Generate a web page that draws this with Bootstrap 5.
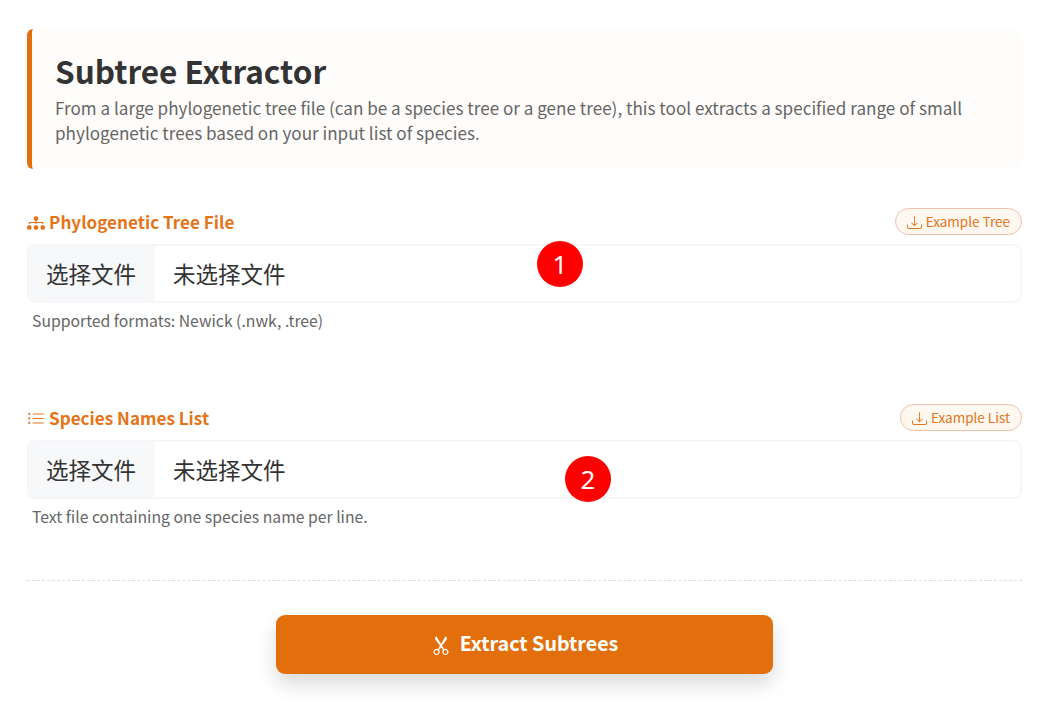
<!DOCTYPE html>
<html lang="en">
<head>
    <meta charset="UTF-8">
    <meta name="viewport" content="width=device-width, initial-scale=1.0">
    <title>Subtree Extractor</title>
    <link href="https://cdn.jsdelivr.net/npm/bootstrap@5.3.0/dist/css/bootstrap.min.css" rel="stylesheet">
    <style>
        body {
            font-family: "Noto Sans CJK SC", "Noto Sans", sans-serif;
            background: #fff;
            color: #333;
            min-height: 100vh;
        }
        .tool-page {
            padding: 29px 29px 34px 27px;
        }
        .tool-header {
            background: #fffdfb;
            border-left: 5px solid #e36f0c;
            border-radius: 6px;
            height: 140px;
            padding: 18px 23px;
            margin-bottom: 39px;
        }
        .tool-header h1 {
            font-size: 31.5px;
            font-weight: 700;
            line-height: 46px;
            margin: 0 0 2px;
            color: #333;
        }
        .tool-header p {
            font-size: 17.1px;
            line-height: 25px;
            margin: 0;
            color: #666;
        }
        .field-block {
            height: 196px;
        }
        .field-block-last {
            height: 176px;
        }
        .field-head {
            height: 27px;
            margin-bottom: 9px;
        }
        .field-label {
            font-size: 17.1px;
            font-weight: 700;
            color: #e3741a;
            margin: 0;
            line-height: 27px;
        }
        .field-label svg {
            width: 18px;
            height: 18px;
            margin-right: 4px;
            vertical-align: -3px;
        }
        .example-btn {
            font-size: 13.5px;
            line-height: 18px;
            color: #e3741a;
            background: #fff8f0;
            border: 1px solid #f2bfa8;
            border-radius: 14px;
            padding: 3px 11px;
            height: 27px;
        }
        .example-btn:hover {
            color: #e3741a;
            background: #fff1e2;
            border-color: #f2bfa8;
        }
        .example-btn svg {
            width: 15px;
            height: 15px;
            margin-right: 4px;
            vertical-align: -3px;
        }
        .file-box {
            position: relative;
            height: 59px;
            border: 2px solid #f6f6f8;
            border-radius: 8px;
            overflow: hidden;
        }
        .file-box .input-group-text {
            font-size: 22.5px;
            color: #333;
            background: #f7f8fa;
            border: 0;
            border-right: 1px solid #f0f0f2;
            border-radius: 0;
            padding: 0 2px 0 0;
            width: 127px;
            justify-content: center;
            cursor: pointer;
        }
        .file-box .form-control {
            font-size: 22.5px;
            color: #333;
            background: #fff;
            border: 0;
            border-radius: 0;
            padding: 0 18px;
            display: flex;
            align-items: center;
        }
        .field-wrap {
            position: relative;
        }
        .step-mark {
            position: absolute;
            width: 46px;
            height: 46px;
            border-radius: 50%;
            background: #fe0000;
            color: #fff;
            font-family: "Noto Sans", sans-serif;
            font-size: 26px;
            line-height: 46px;
            text-align: center;
        }
        .step-one { left: 510px; top: -3px; }
        .step-two { left: 538px; top: 16px; }
        .help-note {
            font-size: 15.75px;
            line-height: 24px;
            color: #666;
            margin: 6px 0 0 5px;
        }
        .dash-line {
            border-top: 1px dashed #ddd;
            margin: 0 0 34px;
            height: 0;
        }
        .extract-btn {
            display: block;
            width: 497px;
            height: 59px;
            margin: 0 auto;
            padding: 0 0 3px;
            font-size: 19.7px;
            font-weight: 700;
            color: #fff;
            background: #e36f0c;
            border: 0;
            border-radius: 9px;
            box-shadow: 0 10px 20px rgba(0, 0, 0, 0.15);
        }
        .extract-btn:hover {
            color: #fff;
            background: #d4660a;
        }
        .extract-btn svg {
            width: 20px;
            height: 20px;
            margin-right: 9px;
            vertical-align: -4px;
        }
    </style>
</head>
<body>
    <div class="tool-page">
        <div class="tool-header">
            <h1>Subtree Extractor</h1>
            <p>From a large phylogenetic tree file (can be a species tree or a gene tree), this tool extracts a specified range of small phylogenetic trees based on your input list of species.</p>
        </div>

        <form>
            <div class="field-block">
                <div class="field-head d-flex justify-content-between align-items-center">
                    <label class="field-label">
                        <svg viewBox="0 0 16 16" fill="currentColor"><path fill-rule="evenodd" d="M6 3.5A1.5 1.5 0 0 1 7.5 2h1A1.5 1.5 0 0 1 10 3.5v1A1.5 1.5 0 0 1 8.5 6v1H14a.5.5 0 0 1 .5.5v1a.5.5 0 0 1-1 0V8h-5v.5a.5.5 0 0 1-1 0V8h-5v.5a.5.5 0 0 1-1 0v-1A.5.5 0 0 1 2 7h5.5V6A1.5 1.5 0 0 1 6 4.5v-1zm-6 8A1.5 1.5 0 0 1 1.5 10h1A1.5 1.5 0 0 1 4 11.5v1A1.5 1.5 0 0 1 2.5 14h-1A1.5 1.5 0 0 1 0 12.5v-1zm6 0A1.5 1.5 0 0 1 7.5 10h1a1.5 1.5 0 0 1 1.5 1.5v1A1.5 1.5 0 0 1 8.5 14h-1A1.5 1.5 0 0 1 6 12.5v-1zm6 0a1.5 1.5 0 0 1 1.5-1.5h1a1.5 1.5 0 0 1 1.5 1.5v1a1.5 1.5 0 0 1-1.5 1.5h-1a1.5 1.5 0 0 1-1.5-1.5v-1z"/></svg>Phylogenetic Tree File
                    </label>
                    <a href="#" class="btn example-btn">
                        <svg viewBox="0 0 16 16" fill="currentColor"><path d="M.5 9.9a.5.5 0 0 1 .5.5v2.5a1 1 0 0 0 1 1h12a1 1 0 0 0 1-1v-2.5a.5.5 0 0 1 1 0v2.5a2 2 0 0 1-2 2H2a2 2 0 0 1-2-2v-2.5a.5.5 0 0 1 .5-.5z"/><path d="M7.646 11.854a.5.5 0 0 0 .708 0l3-3a.5.5 0 0 0-.708-.708L8.5 10.293V1.5a.5.5 0 0 0-1 0v8.793L5.354 8.146a.5.5 0 1 0-.708.708l3 3z"/></svg>Example Tree
                    </a>
                </div>
                <div class="field-wrap">
                    <div class="input-group file-box">
                        <label class="input-group-text">选择文件</label>
                        <span class="form-control">未选择文件</span>
                    </div>
                    <span class="step-mark step-one">1</span>
                </div>
                <div class="help-note">Supported formats: Newick (.nwk, .tree)</div>
            </div>

            <div class="field-block field-block-last">
                <div class="field-head d-flex justify-content-between align-items-center">
                    <label class="field-label">
                        <svg viewBox="0 0 16 16" fill="currentColor"><path fill-rule="evenodd" d="M5 11.5a.5.5 0 0 1 .5-.5h9a.5.5 0 0 1 0 1h-9a.5.5 0 0 1-.5-.5zm0-4a.5.5 0 0 1 .5-.5h9a.5.5 0 0 1 0 1h-9a.5.5 0 0 1-.5-.5zm0-4a.5.5 0 0 1 .5-.5h9a.5.5 0 0 1 0 1h-9a.5.5 0 0 1-.5-.5zm-3 1a1 1 0 1 0 0-2 1 1 0 0 0 0 2zm0 4a1 1 0 1 0 0-2 1 1 0 0 0 0 2zm0 4a1 1 0 1 0 0-2 1 1 0 0 0 0 2z"/></svg>Species Names List
                    </label>
                    <a href="#" class="btn example-btn">
                        <svg viewBox="0 0 16 16" fill="currentColor"><path d="M.5 9.9a.5.5 0 0 1 .5.5v2.5a1 1 0 0 0 1 1h12a1 1 0 0 0 1-1v-2.5a.5.5 0 0 1 1 0v2.5a2 2 0 0 1-2 2H2a2 2 0 0 1-2-2v-2.5a.5.5 0 0 1 .5-.5z"/><path d="M7.646 11.854a.5.5 0 0 0 .708 0l3-3a.5.5 0 0 0-.708-.708L8.5 10.293V1.5a.5.5 0 0 0-1 0v8.793L5.354 8.146a.5.5 0 1 0-.708.708l3 3z"/></svg>Example List
                    </a>
                </div>
                <div class="field-wrap">
                    <div class="input-group file-box">
                        <label class="input-group-text">选择文件</label>
                        <span class="form-control">未选择文件</span>
                    </div>
                    <span class="step-mark step-two">2</span>
                </div>
                <div class="help-note">Text file containing one species name per line.</div>
            </div>

            <div class="dash-line"></div>

            <button type="button" class="btn extract-btn">
                <svg viewBox="0 0 16 16" fill="currentColor"><path d="M3.5 3.5c-.614-.884-.074-1.962.858-2.5L8 7.226 11.642 1c.932.538 1.472 1.616.858 2.5L8.81 8.61l1.556 2.661a2.5 2.5 0 1 1-.794.637L8 9.73l-1.572 2.177a2.5 2.5 0 1 1-.794-.637L7.19 8.61 3.5 3.5zm2.5 10a1.5 1.5 0 1 0-3 0 1.5 1.5 0 0 0 3 0zm7 0a1.5 1.5 0 1 0-3 0 1.5 1.5 0 0 0 3 0z"/></svg>Extract Subtrees
            </button>
        </form>
    </div>
    <script src="https://cdn.jsdelivr.net/npm/bootstrap@5.3.0/dist/js/bootstrap.bundle.min.js"></script>
</body>
</html>
